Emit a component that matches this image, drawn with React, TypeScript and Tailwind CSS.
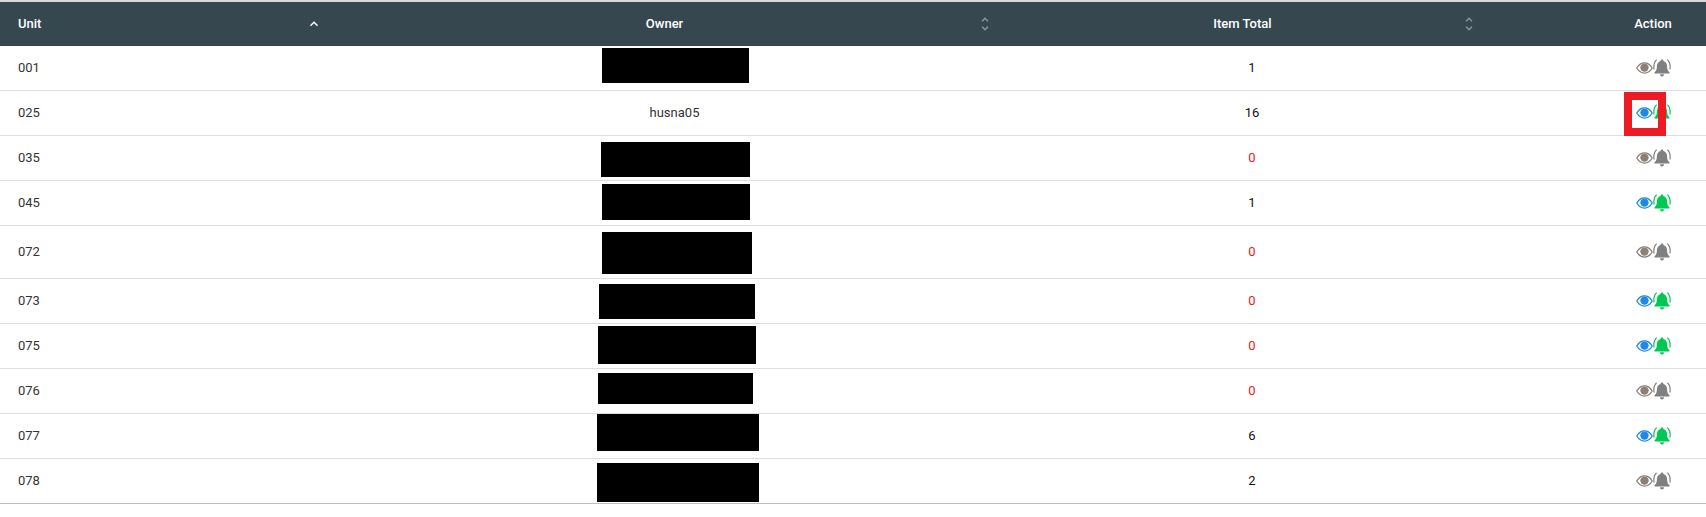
import { MdKeyboardArrowUp, MdUnfoldMore } from "react-icons/md";

type Row = {
  unit: string;
  total: string;
  active: boolean;
  rowClass: string;
  redact?: string;
  owner?: string;
};

const rows: Row[] = [
  { unit: "001", total: "1", active: false, rowClass: "h-[45px] border-[#dddddd]", redact: "ml-[271px] mt-[2px] h-[35px] w-[147px]" },
  { unit: "025", total: "16", active: true, rowClass: "h-[45px] border-[#dddddd]", owner: "husna05" },
  { unit: "035", total: "0", active: false, rowClass: "h-[45px] border-[#dddddd]", redact: "ml-[270px] mt-[6px] h-[35px] w-[149px]" },
  { unit: "045", total: "1", active: true, rowClass: "h-[45px] border-[#dddddd]", redact: "ml-[271px] mt-[3px] h-[36px] w-[148px]" },
  { unit: "072", total: "0", active: false, rowClass: "h-[53px] border-[#dddddd]", redact: "ml-[271px] mt-[6px] h-[42px] w-[150px]" },
  { unit: "073", total: "0", active: true, rowClass: "h-[45px] border-[#dddddd]", redact: "ml-[268px] mt-[5px] h-[35px] w-[156px]" },
  { unit: "075", total: "0", active: true, rowClass: "h-[45px] border-[#dddddd]", redact: "ml-[267px] mt-[2px] h-[38px] w-[158px]" },
  { unit: "076", total: "0", active: false, rowClass: "h-[45px] border-[#dddddd]", redact: "ml-[267px] mt-[4px] h-[31px] w-[155px]" },
  { unit: "077", total: "6", active: true, rowClass: "h-[45px] border-[#dddddd]", redact: "ml-[266px] mt-0 h-[37px] w-[162px]" },
  { unit: "078", total: "2", active: false, rowClass: "h-[45px] border-[#bdbdbd]", redact: "ml-[266px] mt-[4px] h-[39px] w-[162px]" },
];

const columns = "grid grid-cols-[331px_687px_468px_220px]";

function SortIcon() {
  return <MdUnfoldMore className="shrink-0 text-[#8c979c]" size={18} />;
}

function EyeIcon({ className }: { className: string }) {
  return (
    <svg className={className} width="17" height="18" viewBox="0 0 17 18" fill="none">
      <path d="M.8 9C2.800 5.600 5.500 3.900 8.500 3.900S14.200 5.600 16.200 9c-2 3.400-4.700 5.100-7.700 5.100S2.800 12.400.8 9z" stroke="currentColor" strokeWidth="1.3" />
      <circle cx="8.500" cy="8.600" r="4.200" fill="currentColor" />
    </svg>
  );
}

function BellIcon({ className }: { className: string }) {
  return (
    <svg className={className} width="18" height="18" viewBox="0 0 18 18" fill="none">
      <path
        d="M9 .6c-.9 0-1.400.6-1.400 1.400C5.100 2.600 3.900 4.800 3.900 7.300c0 3-.8 4.700-2.400 6v1.200h15v-1.200c-1.600-1.300-2.400-3-2.400-6 0-2.500-1.200-4.700-3.700-5.300C10.400 1.200 9.900.6 9 .6z"
        fill="currentColor"
      />
      <path d="M7 15.200h4a2 2.300 0 0 1-4 0z" fill="currentColor" />
      <path d="M3.600.8C1.400 2.600.5 5.800 1 10.500M14.400.8c2.200 1.800 3.100 5 2.600 9.700" stroke="currentColor" strokeWidth="1.200" />
    </svg>
  );
}

export default function App() {
  return (
    <div className="bg-white text-[13px] text-[#333333] [font-family:Roboto,sans-serif]">
      <div className="h-[2px] bg-[#d9d9d9]" />
      <div className={`${columns} h-[44px] items-center bg-[#37474f] font-medium text-white`}>
        <div className="flex items-center pl-[18px] pr-[9px]">
          <span className="flex-1">Unit</span>
          <MdKeyboardArrowUp className="shrink-0 text-white" size={16} />
        </div>
        <div className="flex items-center pl-[22px] pr-[24px]">
          <span className="flex-1 text-center">Owner</span>
          <SortIcon />
        </div>
        <div className="flex items-center pl-[7px] pr-[8px]">
          <span className="flex-1 text-center">Item Total</span>
          <SortIcon />
        </div>
        <div className="pl-[114px] text-center">Action</div>
      </div>

      <div>
        {rows.map((row) => (
          <div key={row.unit} className={`${columns} ${row.rowClass} border-b`}>
            <div className="flex items-center pl-[18px]">{row.unit}</div>
            {row.owner ? (
              <div className="flex items-center justify-center">{row.owner}</div>
            ) : (
              <div>
                <div className={`bg-black ${row.redact}`} />
              </div>
            )}
            <div
              className={`flex items-center justify-center ${
                row.total === "0" ? "text-[#f01818]" : "text-[#111111]"
              }`}
            >
              {row.total}
            </div>
            <div className="relative flex items-center justify-center pl-[114px]">
              <EyeIcon className={row.active ? "text-[#1e88e5]" : "text-[#8a8078]"} />
              <BellIcon className={row.active ? "text-[#00c853]" : "text-[#808080]"} />
              {row.owner ? (
                <div className="absolute left-[138px] top-px h-[44px] w-[42px] border-8 border-[#ed1c24]" />
              ) : null}
            </div>
          </div>
        ))}
      </div>
    </div>
  );
}
